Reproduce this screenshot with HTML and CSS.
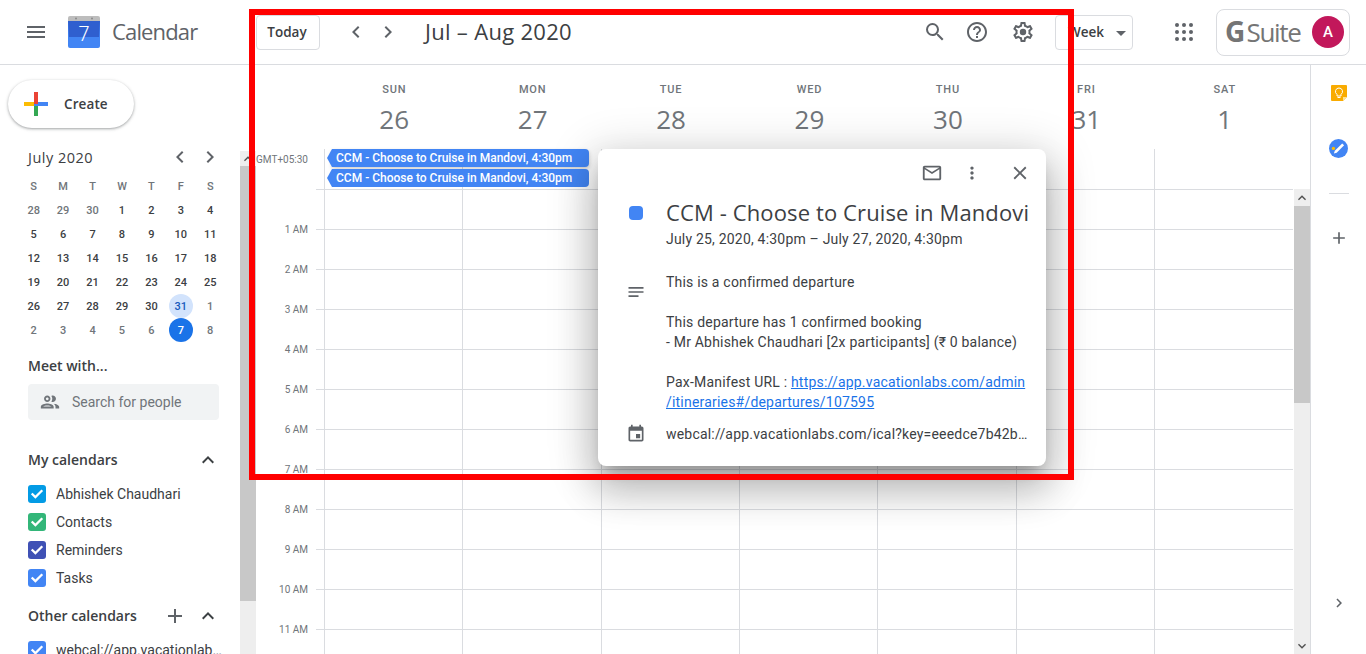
FILE: index.html
```html
<!DOCTYPE html>
<html>
<head>
  <title>Calendar</title>
  <link rel="stylesheet" href="styles.css">
</head>
<body>
  <svg class="icon-defs" width="0" height="0">
    <symbol id="i-menu" viewBox="0 0 24 24"><path d="M3 18h18v-2H3v2zm0-5h18v-2H3v2zm0-7v2h18V6H3z"/></symbol>
    <symbol id="i-left" viewBox="0 0 24 24"><path d="M15.41 7.41L14 6l-6 6 6 6 1.41-1.41L10.83 12z"/></symbol>
    <symbol id="i-right" viewBox="0 0 24 24"><path d="M10 6L8.59 7.41 13.17 12l-4.58 4.59L10 18l6-6z"/></symbol>
    <symbol id="i-up" viewBox="0 0 24 24"><path d="M12 8l-6 6 1.41 1.41L12 10.83l4.59 4.58L18 14z"/></symbol>
    <symbol id="i-add" viewBox="0 0 24 24"><path d="M19 13h-6v6h-2v-6H5v-2h6V5h2v6h6v2z"/></symbol>
    <symbol id="i-check" viewBox="0 0 18 18"><path d="M2.9 9.3l1.6-1.6 2.9 2.9 6.1-6.1 1.6 1.6-7.7 7.7z"/></symbol>
    <symbol id="i-search" viewBox="0 0 24 24"><path d="M15.5 14h-.79l-.28-.27A6.47 6.47 0 0 0 16 9.5 6.5 6.5 0 1 0 9.5 16c1.61 0 3.09-.59 4.23-1.57l.27.28v.79l5 4.99L20.49 19l-4.99-5zm-6 0C7.01 14 5 11.99 5 9.5S7.01 5 9.5 5 14 7.01 14 9.5 11.99 14 9.5 14z"/></symbol>
    <symbol id="i-help" viewBox="0 0 24 24"><path d="M11 18h2v-2h-2v2zm1-16C6.48 2 2 6.48 2 12s4.48 10 10 10 10-4.48 10-10S17.52 2 12 2zm0 18c-4.41 0-8-3.59-8-8s3.59-8 8-8 8 3.59 8 8-3.59 8-8 8zm0-14c-2.21 0-4 1.79-4 4h2c0-1.1.9-2 2-2s2 .9 2 2c0 2-3 1.75-3 5h2c0-2.25 3-2.5 3-5 0-2.21-1.79-4-4-4z"/></symbol>
    <symbol id="i-gear" viewBox="0 0 24 24"><path d="M19.43 12.98c.04-.32.07-.64.07-.98 0-.34-.03-.66-.07-.98l2.11-1.65c.19-.15.24-.42.12-.64l-2-3.46c-.09-.16-.26-.25-.44-.25-.06 0-.12.01-.17.03l-2.49 1c-.52-.4-1.08-.73-1.69-.98l-.38-2.65C14.46 2.18 14.25 2 14 2h-4c-.25 0-.46.18-.49.42l-.38 2.65c-.61.25-1.17.59-1.69.98l-2.49-1c-.06-.02-.12-.03-.18-.03-.17 0-.34.09-.43.25l-2 3.46c-.13.22-.07.49.12.64l2.11 1.65c-.04.32-.07.65-.07.98 0 .33.03.66.07.98l-2.11 1.65c-.19.15-.24.42-.12.64l2 3.46c.09.16.26.25.44.25.06 0 .12-.01.17-.03l2.49-1c.52.4 1.08.73 1.69.98l.38 2.65c.03.24.24.42.49.42h4c.25 0 .46-.18.49-.42l.38-2.65c.61-.25 1.17-.59 1.69-.98l2.49 1c.06.02.12.03.18.03.17 0 .34-.09.43-.25l2-3.46c.12-.22.07-.49-.12-.64l-2.11-1.65zm-1.98-1.71c.04.31.05.52.05.73 0 .21-.02.43-.05.73l-.14 1.13.89.7 1.08.84-.7 1.21-1.27-.51-1.04-.42-.9.68c-.43.32-.84.56-1.25.73l-1.06.43-.16 1.13-.2 1.35h-1.4l-.19-1.35-.16-1.13-1.06-.43c-.43-.18-.83-.41-1.23-.71l-.91-.7-1.06.43-1.27.51-.7-1.21 1.08-.84.89-.7-.14-1.13c-.03-.31-.05-.54-.05-.74s.02-.43.05-.73l.14-1.13-.89-.7-1.08-.84.7-1.21 1.27.51 1.04.42.9-.68c.43-.32.84-.56 1.25-.73l1.06-.43.16-1.13.2-1.35h1.39l.19 1.35.16 1.13 1.06.43c.43.18.83.41 1.23.71l.91.7 1.06-.43 1.27-.51.7 1.21-1.07.85-.89.7.14 1.13z"/><circle cx="12" cy="12" r="3.2"/></symbol>
    <symbol id="i-mail" viewBox="0 0 24 24"><path d="M20 4H4c-1.1 0-1.99.9-1.99 2L2 18c0 1.1.9 2 2 2h16c1.1 0 2-.9 2-2V6c0-1.1-.9-2-2-2zm0 14H4V8l8 5 8-5v10zm-8-7L4 6h16l-8 5z"/></symbol>
    <symbol id="i-more" viewBox="0 0 24 24"><path d="M12 8c1.1 0 2-.9 2-2s-.9-2-2-2-2 .9-2 2 .9 2 2 2zm0 2c-1.1 0-2 .9-2 2s.9 2 2 2 2-.9 2-2-.9-2-2-2zm0 6c-1.1 0-2 .9-2 2s.9 2 2 2 2-.9 2-2-.9-2-2-2z" transform="translate(1.2 1.2) scale(.9)"/></symbol>
    <symbol id="i-close" viewBox="0 0 24 24"><path d="M19 6.41L17.59 5 12 10.59 6.41 5 5 6.41 10.59 12 5 17.59 6.41 19 12 13.41 17.59 19 19 17.59 13.41 12z"/></symbol>
    <symbol id="i-notes" viewBox="0 0 24 24"><path d="M3 18h12v-2H3v2zM3 6v2h18V6H3zm0 7h18v-2H3v2z"/></symbol>
    <symbol id="i-event" viewBox="0 0 24 24"><path d="M17 12h-5v5h5v-5zM16 1v2H8V1H6v2H5c-1.11 0-1.99.9-1.99 2L3 19c0 1.1.89 2 2 2h14c1.1 0 2-.9 2-2V5c0-1.1-.9-2-2-2h-1V1h-2zm3 18H5V8h14v11z"/></symbol>
    <symbol id="i-people" viewBox="0 0 24 24"><path d="M9 13.75c-2.34 0-7 1.17-7 3.5V19h14v-1.75c0-2.33-4.66-3.5-7-3.5zM4.34 17c.84-.58 2.87-1.25 4.66-1.25s3.82.67 4.66 1.25H4.34zM9 12c1.93 0 3.5-1.57 3.5-3.5S10.93 5 9 5 5.5 6.57 5.5 8.5 7.07 12 9 12zm0-5c.83 0 1.5.67 1.5 1.5S9.83 10 9 10s-1.5-.67-1.5-1.5S8.17 7 9 7zm7.04 6.81c1.16.84 1.96 1.96 1.96 3.44V19h4v-1.75c0-2.02-3.5-3.17-5.96-3.44zM15 12c1.93 0 3.5-1.57 3.5-3.5S16.93 5 15 5c-.54 0-1.04.13-1.5.35.63.89 1 1.98 1 3.15s-.37 2.26-1 3.15c.46.22.96.35 1.5.35z"/></symbol>
  </svg>

  <header class="topbar">
    <div class="brand">
      <svg class="icon icon-menu"><use href="#i-menu"/></svg>
      <svg class="logo" viewBox="0 0 32 32" width="32" height="32">
        <path d="M2 0h28a2 2 0 0 1 2 2v4H0V2a2 2 0 0 1 2-2z" fill="#bdbdbd"/>
        <circle cx="8" cy="2.6" r="1" fill="#8a8a8a"/>
        <circle cx="24" cy="2.6" r="1" fill="#8a8a8a"/>
        <path d="M0 5h32v25a2 2 0 0 1-2 2H2a2 2 0 0 1-2-2z" fill="#4285f4"/>
        <path d="M0 5h32l-1 16H1z" fill="#2f5fcf"/>
        <text x="16" y="25" text-anchor="middle" class="logo-num">7</text>
      </svg>
      <span class="brand-name">Calendar</span>
    </div>
    <button class="outline-btn today-btn">Today</button>
    <svg class="icon nav-prev"><use href="#i-left"/></svg>
    <svg class="icon nav-next"><use href="#i-right"/></svg>
    <h1 class="range-title">Jul – Aug 2020</h1>
    <svg class="icon tool-search"><use href="#i-search"/></svg>
    <svg class="icon tool-help"><use href="#i-help"/></svg>
    <svg class="icon tool-gear"><use href="#i-gear"/></svg>
    <button class="outline-btn week-btn">Week<span class="caret"></span></button>
    <svg class="apps-grid" viewBox="0 0 18 18" width="18" height="18">
      <circle cx="2" cy="2" r="2"/><circle cx="9" cy="2" r="2"/><circle cx="16" cy="2" r="2"/>
      <circle cx="2" cy="9" r="2"/><circle cx="9" cy="9" r="2"/><circle cx="16" cy="9" r="2"/>
      <circle cx="2" cy="16" r="2"/><circle cx="9" cy="16" r="2"/><circle cx="16" cy="16" r="2"/>
    </svg>
    <div class="account">
      <span class="suite-name"><b>G</b> Suite</span>
      <span class="avatar">A</span>
    </div>
  </header>

  <div class="layout">
    <aside class="sidebar">
      <button class="create-btn">
        <svg class="create-plus" viewBox="0 0 24 24" width="24" height="24">
          <rect x="0" y="10" width="10" height="4" fill="#fbbc04"/>
          <rect x="14" y="10" width="10" height="4" fill="#4285f4"/>
          <rect x="10" y="14" width="4" height="10" fill="#34a853"/>
          <rect x="10" y="12" width="4" height="2" fill="#4285f4"/>
          <rect x="10" y="0" width="4" height="12" fill="#ea4335"/>
        </svg>
        <span class="create-label">Create</span>
      </button>

      <div class="mini-head">
        <span class="mini-title">July 2020</span>
        <svg class="icon"><use href="#i-left"/></svg>
        <svg class="icon"><use href="#i-right"/></svg>
      </div>
      <div class="mini-cal">
        <span class="dow">S</span><span class="dow">M</span><span class="dow">T</span><span class="dow">W</span><span class="dow">T</span><span class="dow">F</span><span class="dow">S</span>
        <span class="off">28</span><span class="off">29</span><span class="off">30</span><span>1</span><span>2</span><span>3</span><span>4</span>
        <span>5</span><span>6</span><span>7</span><span>8</span><span>9</span><span>10</span><span>11</span>
        <span>12</span><span>13</span><span>14</span><span>15</span><span>16</span><span>17</span><span>18</span>
        <span>19</span><span>20</span><span>21</span><span>22</span><span>23</span><span>24</span><span>25</span>
        <span>26</span><span>27</span><span>28</span><span>29</span><span>30</span><span class="selected">31</span><span class="off">1</span>
        <span class="off">2</span><span class="off">3</span><span class="off">4</span><span class="off">5</span><span class="off">6</span><span class="today">7</span><span class="off">8</span>
      </div>

      <div class="side-title meet-title">Meet with...</div>
      <div class="people-search">
        <svg class="icon"><use href="#i-people"/></svg>
        <span>Search for people</span>
      </div>

      <div class="side-title section-head my-head">
        <span class="section-name">My calendars</span>
        <svg class="icon icon-dark"><use href="#i-up"/></svg>
      </div>
      <ul class="cal-list">
        <li><span class="check check-sky"><svg><use href="#i-check"/></svg></span>Abhishek Chaudhari</li>
        <li><span class="check check-green"><svg><use href="#i-check"/></svg></span>Contacts</li>
        <li><span class="check check-indigo"><svg><use href="#i-check"/></svg></span>Reminders</li>
        <li><span class="check check-blue"><svg><use href="#i-check"/></svg></span>Tasks</li>
      </ul>

      <div class="side-title section-head other-head">
        <span class="section-name">Other calendars</span>
        <svg class="icon"><use href="#i-add"/></svg>
        <svg class="icon icon-dark"><use href="#i-up"/></svg>
      </div>
      <ul class="cal-list">
        <li><span class="check check-blue"><svg><use href="#i-check"/></svg></span><span class="cal-name">webcal://app.vacationlabs.com/ical</span></li>
      </ul>
    </aside>

    <div class="scrollbar side-scroll">
      <div class="sb-btn"><svg><use href="#i-up"/></svg></div>
      <div class="sb-thumb"></div>
    </div>

    <main class="main">
      <div class="day-head">
        <div class="day"><span class="day-name">SUN</span><span class="day-num">26</span></div>
        <div class="day"><span class="day-name">MON</span><span class="day-num">27</span></div>
        <div class="day"><span class="day-name">TUE</span><span class="day-num">28</span></div>
        <div class="day"><span class="day-name">WED</span><span class="day-num">29</span></div>
        <div class="day"><span class="day-name">THU</span><span class="day-num">30</span></div>
        <div class="day"><span class="day-name">FRI</span><span class="day-num">31</span></div>
        <div class="day"><span class="day-name">SAT</span><span class="day-num">1</span></div>
      </div>

      <div class="allday">
        <div class="gmt">GMT+05:30</div>
        <div class="allday-cols">
          <div class="chip chip-raised">CCM - Choose to Cruise in Mandovi, 4:30pm</div>
          <div class="chip">CCM - Choose to Cruise in Mandovi, 4:30pm</div>
        </div>
      </div>

      <div class="hours">
        <div class="gutter">
          <div class="hour">1 AM</div>
          <div class="hour">2 AM</div>
          <div class="hour">3 AM</div>
          <div class="hour">4 AM</div>
          <div class="hour">5 AM</div>
          <div class="hour">6 AM</div>
          <div class="hour">7 AM</div>
          <div class="hour">8 AM</div>
          <div class="hour">9 AM</div>
          <div class="hour">10 AM</div>
          <div class="hour">11 AM</div>
        </div>
        <div class="hour-grid"></div>
        <div class="scrollbar main-scroll">
          <div class="sb-btn"><svg><use href="#i-up"/></svg></div>
          <div class="sb-thumb"></div>
          <div class="sb-track"></div>
          <div class="sb-btn sb-down"><svg><use href="#i-up"/></svg></div>
        </div>
      </div>
    </main>

    <aside class="rail">
      <svg class="rail-keep" viewBox="0 0 16 16" width="16" height="16">
        <path d="M1 0h14a1 1 0 0 1 1 1v11l-4 4H1a1 1 0 0 1-1-1V1a1 1 0 0 1 1-1z" fill="#f9ab00"/>
        <path d="M12 16v-4h4z" fill="#fde293"/>
        <path d="M8 3a3.5 3.5 0 0 0-2 6.4V11h4V9.4A3.5 3.5 0 0 0 8 3z" fill="none" stroke="#fff" stroke-width="1"/>
        <rect x="6.5" y="12" width="3" height="1" fill="#fff"/>
      </svg>
      <svg class="rail-tasks" viewBox="0 0 19 19" width="19" height="19">
        <circle cx="9.5" cy="9.5" r="9.5" fill="#4285f4"/>
        <path d="M5.8 11.8l7.4-7.4 1.9 1.9-7.4 7.4-2.8.9z" fill="#fff"/>
        <circle cx="4.4" cy="9.4" r="1.7" fill="#fbbc04"/>
      </svg>
      <div class="rail-line"></div>
      <svg class="icon rail-add"><use href="#i-add"/></svg>
      <svg class="icon rail-more"><use href="#i-right"/></svg>
    </aside>
  </div>

  <section class="popup">
    <div class="popup-tools">
      <svg class="icon tool-mail"><use href="#i-mail"/></svg>
      <svg class="icon tool-more"><use href="#i-more"/></svg>
      <svg class="icon tool-close"><use href="#i-close"/></svg>
    </div>
    <div class="popup-body">
      <div class="popup-cell"><span class="color-dot"></span></div>
      <div>
        <h2 class="popup-title">CCM - Choose to Cruise in Mandovi</h2>
        <div class="popup-when">July 25, 2020, 4:30pm – July 27, 2020, 4:30pm</div>
      </div>
      <div class="popup-cell notes-cell"><svg class="icon"><use href="#i-notes"/></svg></div>
      <div class="popup-desc">
        This is a confirmed departure<br><br>
        This departure has 1 confirmed booking<br>
        - Mr Abhishek Chaudhari [2x participants] (₹ 0 balance)<br><br>
        Pax-Manifest URL : <a href="#">https://app.vacationlabs.com/admin<br>/itineraries#/departures/107595</a>
      </div>
      <div class="popup-cell cal-cell"><svg class="icon"><use href="#i-event"/></svg></div>
      <div class="popup-source">webcal://app.vacationlabs.com/ical?key=eeedce7b42b1f0a9c3</div>
    </div>
  </section>

  <div class="red-frame"></div>
</body>
</html>
```

FILE: styles.css
```css
* { box-sizing: border-box; }
html, body { height: 100%; }
body { margin: 0; overflow: hidden; background: #fff; color: #3c4043; font-family: Roboto, "Liberation Sans", sans-serif; font-size: 14px; }
ul { list-style: none; margin: 0; padding: 0; }
h1, h2 { margin: 0; font-weight: 400; }
button { font-family: inherit; cursor: pointer; }

.icon-defs { display: block; height: 0; }
.icon { display: block; width: 24px; height: 24px; flex: none; fill: #5f6368; }

/* top bar */
.topbar { display: flex; align-items: center; height: 65px; border-bottom: 1px solid #dadce0; }
.brand { display: flex; align-items: center; width: 256px; flex: none; padding-left: 24px; }
.icon-menu { margin-right: 20px; }
.logo { flex: none; }
.logo-num { font-family: Roboto, sans-serif; font-size: 20px; font-weight: 300; fill: #fff; }
.brand-name { margin: 0 0 2px 12px; font-family: "Open Sans", sans-serif; font-size: 22px; color: #5f6368; letter-spacing: -0.85px; }

.outline-btn { height: 35px; padding: 0; background: #fff; border: 1px solid #dadce0; border-radius: 4px; font-family: "Open Sans", sans-serif; font-size: 13.5px; font-weight: 600; color: #3c4043; }
.today-btn { width: 64px; flex: none; padding-right: 2px; }
.nav-prev { margin-left: 24px; }
.nav-next { margin-left: 8px; }
.range-title { margin: 0 0 2px 25px; font-family: "Open Sans", sans-serif; font-size: 22px; color: #3c4043; letter-spacing: .3px; white-space: nowrap; }
.tool-search { margin-left: auto; }
.tool-help { margin-left: 18px; }
.tool-gear { margin-left: 22px; }
.week-btn { display: flex; align-items: center; width: 78px; margin-left: 20px; padding-left: 12px; flex: none; }
.caret { margin: 2px 0 0 12px; border-top: 5px solid #5f6368; border-left: 5px solid transparent; border-right: 5px solid transparent; }
.apps-grid { flex: none; margin-left: 42px; fill: #5f6368; }
.account { display: flex; align-items: center; width: 134px; height: 47px; margin: 0 16px 0 23px; padding-left: 8px; flex: none; border: 1px solid #dadce0; border-radius: 8px; }
.suite-name { margin-bottom: 2px; font-family: "Open Sans", sans-serif; font-size: 26px; color: #757575; letter-spacing: -1.3px; word-spacing: -3px; white-space: nowrap; }
.suite-name b { font-size: 28px; font-weight: 700; }
.avatar { display: flex; align-items: center; justify-content: center; width: 32px; height: 32px; margin-left: auto; margin-right: 5px; border-radius: 50%; background: #c2185b; color: #fff; font-size: 15px; font-weight: 500; }

.layout { display: flex; height: 589px; }

/* left side */
.sidebar { width: 240px; flex: none; overflow: hidden; padding-left: 28px; }
.create-btn { display: flex; align-items: center; width: 126px; height: 48px; margin: 15px 0 0 -20px; padding: 0 0 0 16px; background: #fff; border: none; border-radius: 24px; box-shadow: 0 1px 2px 0 rgba(60,64,67,.3), 0 1px 3px 1px rgba(60,64,67,.15); font-family: "Open Sans", sans-serif; font-size: 13.5px; font-weight: 600; color: #3c4043; }
.create-plus { margin-right: 16px; }
.create-label { letter-spacing: .1px; }

.mini-head { display: flex; align-items: center; width: 194px; height: 24px; margin-top: 17px; }
.mini-title { flex: 1; font-size: 14.5px; font-family: "Open Sans", sans-serif; color: #3c4043; letter-spacing: .5px; }
.mini-head .icon { width: 24px; height: 24px; margin-left: 6px; }
.mini-cal { display: grid; grid-template-columns: repeat(7, 29.43px); grid-auto-rows: 24px; margin: 5px 0 0 -9px; font-size: 11px; font-weight: 500; color: #3c4043; text-align: center; }
.mini-cal span { display: flex; align-items: center; justify-content: center; justify-self: center; width: 24px; height: 24px; border-radius: 50%; }
.mini-cal .dow, .mini-cal .off { color: #70757a; }
.mini-cal .selected { background: #d2e3fc; color: #185abc; }
.mini-cal .today { background: #1a73e8; color: #fff; }

.side-title { height: 20px; font-family: "Open Sans", sans-serif; font-size: 14px; font-weight: 600; line-height: 20px; color: #3c4043; }
.meet-title { margin-top: 14px; }
.people-search { display: flex; align-items: center; width: 191px; height: 36px; margin-top: 8px; padding-left: 11px; background: #f1f3f4; border-radius: 4px; color: #70757a; }
.people-search .icon { width: 22px; height: 22px; margin-right: 11px; fill: #70757a; }
.section-head { display: flex; align-items: center; width: 192px; }
.section-name { flex: 1; }
.my-head { margin-top: 30px; }
.other-head { margin-top: 14px; }
.other-head .icon-dark { margin-left: 9px; }
.icon-dark { fill: #3c4043; }

.cal-list { margin-top: 10px; }
.cal-list li { display: flex; align-items: center; height: 28px; }
.check { display: flex; width: 18px; height: 18px; margin-right: 10px; flex: none; border-radius: 3px; }
.check svg { width: 18px; height: 18px; fill: #fff; }
.check-sky { background: #039be5; }
.check-green { background: #33b679; }
.check-indigo { background: #3f51b5; }
.check-blue { background: #4285f4; }
.cal-name { width: 168px; overflow: hidden; white-space: nowrap; text-overflow: ellipsis; }

/* scrollbars */
.scrollbar { display: flex; flex-direction: column; width: 16px; flex: none; background: #eee; }
.side-scroll { margin-top: 86px; }
.side-scroll .sb-btn { height: 15px; }
.side-scroll .sb-thumb { height: 435px; }
.main-scroll .sb-thumb { height: 197px; }
.sb-btn { display: flex; align-items: center; justify-content: center; height: 17px; flex: none; }
.sb-btn svg { width: 16px; height: 16px; fill: #505050; }
.sb-down svg { transform: rotate(180deg); }
.sb-thumb { background: #c8c8c8; flex: none; }
.sb-track { flex: 1; }

/* week view */
.main { flex: 1; min-width: 0; display: flex; flex-direction: column; }
.day-head { display: grid; grid-template-columns: repeat(7, 138.43px); height: 84px; padding-left: 68px; }
.day { display: flex; flex-direction: column; align-items: center; padding: 15px 0 0 2px; }
.day-name { height: 20px; font-size: 11px; font-weight: 500; line-height: 20px; letter-spacing: .8px; color: #70757a; }
.day-num { margin-top: 1px; font-family: "Open Sans", sans-serif; font-size: 26px; line-height: 36px; color: #70757a; }

.allday { display: flex; height: 40px; }
.gmt { width: 68px; flex: none; padding-right: 16px; font-size: 10px; line-height: 22px; text-align: right; color: #70757a; }
.allday-cols { width: 969px; background: repeating-linear-gradient(to right, #dadce0 0 1px, transparent 1px 138.3px) left top / 968px 100% no-repeat; }
.chip { position: relative; width: 257px; height: 18px; margin: 0 0 2px 8px; padding-left: 4px; background: #4285f4; border-radius: 0 4px 4px 0; color: #fff; font-size: 12px; font-weight: 500; line-height: 18px; white-space: nowrap; }
.chip::before { content: ""; position: absolute; left: -5px; top: 0; border-top: 9px solid transparent; border-bottom: 9px solid transparent; border-right: 5px solid #4285f4; }
.chip-raised { box-shadow: 0 2px 4px rgba(0,0,0,.2); }

.hours { flex: 1; display: flex; min-height: 0; }
.gutter { width: 68px; flex: none; padding: 21px 16px 0 0; background: repeating-linear-gradient(to bottom, #dadce0 0 1px, transparent 1px 40px) right top / 8px 100% no-repeat; }
.hour { height: 40px; font-size: 10px; line-height: 40px; text-align: right; color: #70757a; }
.hour-grid { width: 969px; margin-right: 1px; background-image: repeating-linear-gradient(to bottom, #dadce0 0 1px, transparent 1px 40px), repeating-linear-gradient(to right, #dadce0 0 1px, transparent 1px 138.3px); background-size: 100% 100%, 968px 100%; background-repeat: no-repeat; }

/* right rail */
.rail { display: flex; flex-direction: column; align-items: center; width: 56px; flex: none; padding: 20px 0 42px; border-left: 1px solid #dadce0; }
.rail-keep { flex: none; }
.rail-tasks { flex: none; margin-top: 38px; }
.rail-line { width: 20px; height: 1px; margin-top: 35px; background: #dadce0; }
.rail-add { width: 20px; height: 20px; margin-top: 34px; }
.rail-more { margin-top: auto; width: 18px; height: 18px; }

/* event popup */
.popup { position: absolute; left: 598px; top: 149px; width: 448px; height: 317px; background: #fff; border-radius: 8px; box-shadow: 0 24px 38px 3px rgba(0,0,0,.18), 0 9px 46px 8px rgba(0,0,0,.16), 0 11px 15px -7px rgba(0,0,0,.24); letter-spacing: .2px; }
.popup-tools { display: flex; align-items: center; height: 48px; padding-left: 323px; }
.popup-tools .icon { width: 22px; height: 22px; }
.tool-more { margin-left: 18px; }
.tool-close { margin-left: 26px; }
.popup-body { display: grid; grid-template-columns: 68px 1fr; margin-top: 2px; }
.popup-cell { padding-left: 28px; }
.popup-cell .icon { width: 20px; height: 20px; }
.color-dot { display: block; width: 14px; height: 14px; margin: 7px 0 0 3px; background: #4285f4; border-radius: 4px; }
.popup-title { height: 28px; font-family: "Open Sans", sans-serif; font-size: 22px; line-height: 26px; color: #3c4043; letter-spacing: .12px; white-space: nowrap; }
.popup-when { margin-top: 2px; line-height: 20px; }
.notes-cell { padding-top: 33px; }
.popup-desc { margin-top: 23px; line-height: 20px; white-space: nowrap; }
.popup-desc a { color: #1a73e8; }
.cal-cell { padding-top: 12px; }
.popup-source { width: 363px; margin-top: 12px; line-height: 20px; overflow: hidden; white-space: nowrap; text-overflow: ellipsis; }

/* annotation drawn over the screenshot */
.red-frame { position: absolute; left: 249px; top: 9px; width: 825px; height: 471px; border: 6px solid #f00; pointer-events: none; }
```
